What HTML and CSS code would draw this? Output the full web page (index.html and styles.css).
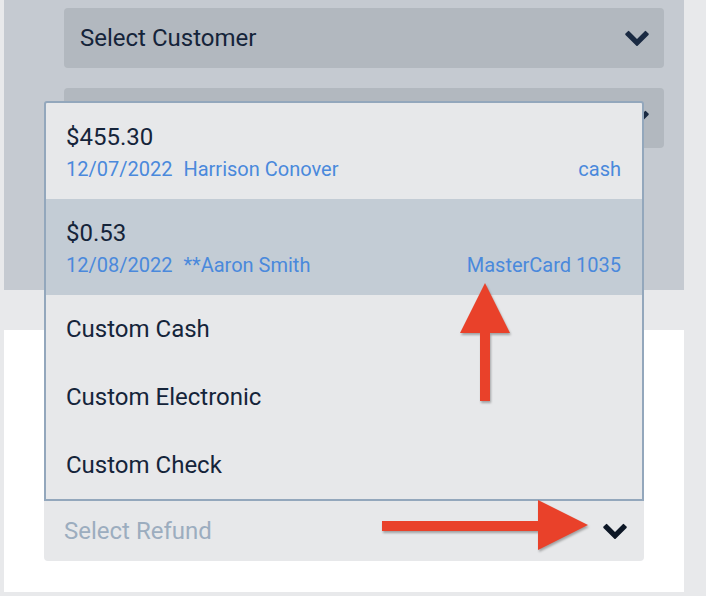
FILE: index.html
```html
<!DOCTYPE html>
<html lang="en">
<head>
  <meta charset="UTF-8" />
  <meta name="viewport" content="width=device-width, initial-scale=1.0"/>
  <title>Refund</title>
  <link rel="stylesheet" href="styles.css">
</head>
<body>
  <section class="painel-topo">
    <div class="campo campo-escuro">
      <span>Select Customer</span>
      <svg class="seta" viewBox="90 474 1612 1094"><path d="M1683 808l-742 741q-19 19-45 19t-45-19l-742-741q-19-19-19-45.5t19-45.5l166-165q19-19 45-19t45 19l531 531 531-531q19-19 45-19t45 19l166 165q19 19 19 45.5t-19 45.5z"/></svg>
    </div>
    <div class="campo campo-escuro">
      <span></span>
      <svg class="seta" viewBox="90 474 1612 1094"><path d="M1683 808l-742 741q-19 19-45 19t-45-19l-742-741q-19-19-19-45.5t19-45.5l166-165q19-19 45-19t45 19l531 531 531-531q19-19 45-19t45 19l166 165q19 19 19 45.5t-19 45.5z"/></svg>
    </div>
  </section>

  <section class="painel-branco">
    <div class="refund">
      <ul class="lista">
        <li class="opcao">
          <div class="valor">$455.30</div>
          <div class="detalhe">
            <span><span class="data">12/07/2022</span>Harrison Conover</span>
            <span>cash</span>
          </div>
        </li>
        <li class="opcao ativa">
          <div class="valor">$0.53</div>
          <div class="detalhe">
            <span><span class="data">12/08/2022</span>**Aaron Smith</span>
            <span>MasterCard 1035</span>
          </div>
        </li>
        <li class="opcao simples">Custom Cash</li>
        <li class="opcao simples">Custom Electronic</li>
        <li class="opcao simples">Custom Check</li>
      </ul>
      <div class="campo campo-claro">
        <span>Select Refund</span>
        <svg class="seta" viewBox="90 474 1612 1094"><path d="M1683 808l-742 741q-19 19-45 19t-45-19l-742-741q-19-19-19-45.5t19-45.5l166-165q19-19 45-19t45 19l531 531 531-531q19-19 45-19t45 19l166 165q19 19 19 45.5t-19 45.5z"/></svg>
      </div>
    </div>
  </section>

  <!-- setas de anotação por cima da tela -->
  <svg class="anotacao" width="706" height="596" viewBox="0 0 706 596">
    <g fill="#e9412a">
      <polygon points="460,333 485,283 510,333"/>
      <rect x="480" y="332" width="10" height="69"/>
      <rect x="382" y="521" width="157" height="10"/>
      <polygon points="538,500 588,525 538,550"/>
    </g>
  </svg>
</body>
</html>
```

FILE: styles.css
```css
:root {
  --fundo: #e8e9eb;
  --painel: #c5cad1;
  --campo-escuro: #b2b8bf;
  --campo-claro: #e7e8ea;
  --texto: #15243a;
  --azul: #4a89dc;
  --placeholder: #9cadbf;
  --borda: #93a7bc;
  --ativa: #c3ccd5;
}

body, html {
  margin: 0;
  padding: 0;
  width: 706px;
  height: 596px;
  overflow: hidden;
  background-color: var(--fundo);
  font-family: Roboto, "Liberation Sans", Arial, sans-serif;
  color: var(--texto);
}

body {
  position: relative;
}

.painel-topo {
  margin-left: 4px;
  width: 680px;
  height: 290px;
  box-sizing: border-box;
  padding: 8px 0 0 60px;
  background-color: var(--painel);
  display: flex;
  flex-direction: column;
  gap: 20px;
}

.painel-branco {
  margin: 40px 0 0 4px;
  width: 680px;
  height: 262px;
  box-sizing: border-box;
  padding: 171px 0 0 40px;
  background-color: white;
}

.campo {
  width: 600px;
  height: 60px;
  box-sizing: border-box;
  display: flex;
  align-items: center;
  justify-content: space-between;
  font-size: 24px;
  line-height: 28px;
  border-radius: 4px;
}

.campo-escuro {
  padding: 0 15px 0 16px;
  background-color: var(--campo-escuro);
}

.campo-claro {
  padding: 0 17px 0 20px;
  background-color: var(--campo-claro);
  color: var(--placeholder);
  border-radius: 0 0 4px 4px;
}

.seta {
  width: 24px;
  height: 16px;
  fill: #1a2a42;
}

.campo-claro .seta {
  fill: #0d1726;
}

.refund {
  position: relative;
  width: 600px;
}

.lista {
  position: absolute;
  left: 0;
  bottom: 100%;
  width: 600px;
  box-sizing: border-box;
  margin: 0;
  padding: 0;
  list-style: none;
  background-color: var(--campo-claro);
  border: 2px solid var(--borda);
  border-radius: 3px 3px 0 0;
}

.opcao {
  padding: 20px 21px 18px 20px;
}

.opcao.ativa {
  background-color: var(--ativa);
}

.opcao.simples {
  padding: 20px 21px 20px 20px;
  font-size: 24px;
  line-height: 28px;
}

.valor {
  font-size: 24px;
  line-height: 28px;
}

.detalhe {
  margin-top: 6px;
  display: flex;
  justify-content: space-between;
  font-size: 20px;
  line-height: 24px;
  color: var(--azul);
}

.data {
  margin-right: 11px;
}

.anotacao {
  position: absolute;
  left: 0;
  top: 0;
  pointer-events: none;
  filter: drop-shadow(1px 2px 1px rgba(0, 0, 0, 0.3));
}
```
